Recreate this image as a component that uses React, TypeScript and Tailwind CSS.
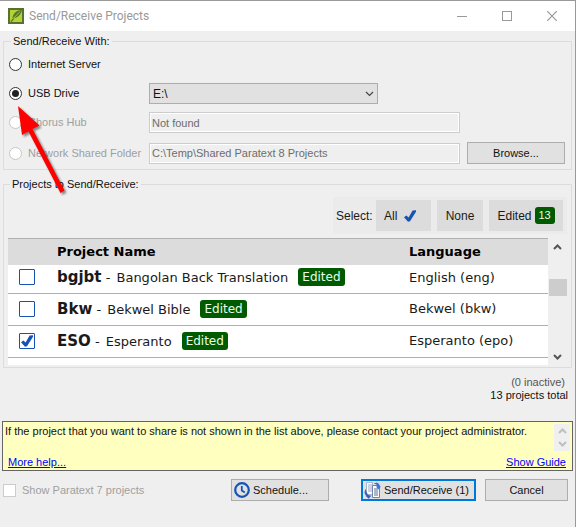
import React from "react";

const projects = [
  { code: "bgjbt", name: "Bangolan Back Translation", language: "English (eng)", checked: false },
  { code: "Bkw", name: "Bekwel Bible", language: "Bekwel (bkw)", checked: false },
  { code: "ESO", name: "Esperanto", language: "Esperanto (epo)", checked: true },
];

const buttonBase = "flex h-[22px] items-center border border-[#adadad] bg-[#e1e1e1]";

const radioStyle =
  "relative h-[13px] w-[13px] shrink-0 appearance-none rounded-full border border-[#333] bg-white checked:before:absolute checked:before:inset-[2px] checked:before:rounded-full checked:before:bg-[#222] disabled:border-[#c6c6c6]";

function Tick({ className }: { className: string }) {
  return (
    <svg viewBox="0 0 12 12" className={className} aria-hidden="true">
      <path d="M0 7.2 2.4 5.4 4.6 7.4 8.6 0.6 12 0.2 12 1.8 6 11.2 4 11.8Z" fill="#1553b5" />
    </svg>
  );
}

function Chevron({
  up = false,
  thin = false,
  className,
}: {
  up?: boolean;
  thin?: boolean;
  className: string;
}) {
  return (
    <svg viewBox="0 0 9 6" className={className} aria-hidden="true">
      <path
        d={up ? "M1 5 4.5 1.5 8 5" : "M1 1 4.5 4.5 8 1"}
        fill="none"
        stroke="currentColor"
        strokeWidth={thin ? 1.2 : 2}
      />
    </svg>
  );
}

function TitleBar() {
  return (
    <header className="flex h-[30px] items-center bg-white pl-2 text-[#999]">
      <svg viewBox="0 0 16 16" className="h-4 w-4" aria-hidden="true">
        <rect width="16" height="16" fill="#56722f" />
        <rect x="2" y="2" width="12" height="12" fill="#b2d235" />
        <path d="M14 2C9 2 5.4 5 4.4 9.6L7 10C11 8.6 13 6 14 2Z" fill="#56722f" />
        <path d="M3 13.6 6 10" stroke="#56722f" strokeWidth="1.2" />
        <path d="M5.2 10.6 12 3.6" stroke="#b2d235" strokeWidth=".9" />
      </svg>
      <h1 className="ml-[5px] flex-1 font-['Roboto',sans-serif] text-[12px]">Send/Receive Projects</h1>
      <button aria-label="Minimize" className="flex h-full w-[45px] items-center justify-center">
        <svg viewBox="0 0 10 10" className="h-[10px] w-[10px]">
          <path d="M0 5.5H10" stroke="#999" />
        </svg>
      </button>
      <button aria-label="Maximize" className="flex h-full w-[45px] items-center justify-center">
        <svg viewBox="0 0 10 10" className="h-[10px] w-[10px]">
          <rect x=".5" y=".5" width="9" height="9" fill="none" stroke="#999" />
        </svg>
      </button>
      <button aria-label="Close" className="flex h-full w-[46px] items-center justify-center">
        <svg viewBox="0 0 10 10" className="h-[10px] w-[10px]">
          <path d="M0 0 10 10M10 0 0 10" stroke="#999" strokeWidth="1.2" />
        </svg>
      </button>
    </header>
  );
}

function ConnectionOption({
  id,
  label,
  checked = false,
  disabled = false,
}: {
  id: string;
  label: string;
  checked?: boolean;
  disabled?: boolean;
}) {
  return (
    <div className="flex w-[140px] shrink-0 items-center gap-[6px]">
      <input id={id} type="radio" name="target" defaultChecked={checked} disabled={disabled} className={radioStyle} />
      <label htmlFor={id} className={disabled ? "text-[#a0a0a0]" : ""}>
        {label}
      </label>
    </div>
  );
}

function ConnectionGroup() {
  const field =
    "h-[21px] w-[311px] border border-[#ccc] bg-[#efefef] px-[2px] text-[#6d6d6d] shadow-[inset_0_0_0_1px_white]";
  return (
    <fieldset className="mx-[3px] border border-[#dcdcdc] pl-[5px] pr-[6px]">
      <legend className="ml-[2px] px-[2px] leading-[17px]">Send/Receive With:</legend>
      <div className="flex h-[29px] items-center">
        <ConnectionOption id="internet" label="Internet Server" />
      </div>
      <div className="flex h-[29px] items-center">
        <ConnectionOption id="usb" label="USB Drive" checked />
        <div className="relative">
          <select
            aria-label="USB drive letter"
            className="block h-[21px] w-[229px] appearance-none border border-[#adadad] bg-[#e1e1e1] px-[3px] text-[12px]"
          >
            <option>E:\</option>
          </select>
          <Chevron thin className="pointer-events-none absolute right-1 top-2 h-[6px] w-[9px] text-[#444]" />
        </div>
      </div>
      <div className="flex h-[29px] items-center">
        <ConnectionOption id="chorus" label="Chorus Hub" disabled />
        <input aria-label="Chorus Hub address" disabled defaultValue="Not found" className={field} />
      </div>
      <div className="flex h-8 items-center">
        <ConnectionOption id="network" label="Network Shared Folder" disabled />
        <input
          aria-label="Shared folder path"
          disabled
          defaultValue="C:\Temp\Shared Paratext 8 Projects"
          className={field}
        />
        <button className={`${buttonBase} ml-auto w-[98px] justify-center`}>Browse...</button>
      </div>
    </fieldset>
  );
}

function ProjectTable() {
  return (
    <div className="mt-1 flex h-[127px]">
      <div className="flex-1 overflow-hidden border-t border-[#b0b0b0] bg-white">
        <table className="w-full table-fixed border-collapse text-left font-['DejaVu_Sans',sans-serif] text-[13px] text-black">
          <thead className="bg-[#dcdcdc]">
            <tr className="h-[26px]">
              <th className="w-[49px] p-0" aria-label="Selected" />
              <th className="p-0 leading-[18px]">Project Name</th>
              <th className="w-[139px] p-0 leading-[18px]">Language</th>
            </tr>
          </thead>
          <tbody>
            {projects.map((p, i) => (
              <tr
                key={p.code}
                className={`border-b border-[#b0b0b0] ${i === 0 ? "h-7 [&>td]:pb-[3px]" : "h-8"}`}
              >
                <td className="p-0 pl-[11px]">
                  <span className="relative flex h-4 w-4">
                    <input
                      type="checkbox"
                      aria-label={`Select ${p.code}`}
                      defaultChecked={p.checked}
                      className="h-4 w-4 appearance-none rounded-[1px] border border-[#1553b5] bg-white"
                    />
                    {p.checked && <Tick className="pointer-events-none absolute left-[2px] top-[2px] h-3 w-3" />}
                  </span>
                </td>
                <td className="p-0">
                  <div className="flex items-center leading-[18px] text-[#1a1a1a]">
                    <span className="whitespace-pre">
                      <b className="text-[15px]">{p.code}</b>
                      <span className="mr-[2px]"> - </span>
                      {p.name}
                    </span>
                    <span className="ml-[10px] rounded-[3px] bg-[#005a00] px-1 text-[12px] text-[#e8ffe8]">Edited</span>
                  </div>
                </td>
                <td className="p-0 text-[#1a1a1a]">{p.language}</td>
              </tr>
            ))}
          </tbody>
        </table>
      </div>
      <div className="flex w-[19px] flex-col items-center text-[#555]">
        <Chevron up className="my-[6px] h-[6px] w-[9px]" />
        <div className="mt-[23px] h-[17px] w-[18px] bg-[#cdcdcd]" />
        <Chevron className="mb-[5px] mt-auto h-[6px] w-[9px]" />
      </div>
    </div>
  );
}

function ProjectsGroup() {
  const toolButton = "flex h-[31px] items-center bg-[#dcdcdc]";
  return (
    <fieldset className="mx-[3px] mt-[6px] border border-[#dcdcdc] pb-[2px] pl-1 pr-1">
      <legend className="ml-[2px] px-[2px] leading-[17px]">Projects to Send/Receive:</legend>
      <div className="ml-auto mt-1 flex h-[37px] w-[234px] items-center gap-[6px] bg-[#ebebeb] pl-[3px] text-[12px] text-[#1a1a1a]">
        <span className="-mr-[3px] w-[37px]">Select:</span>
        <button className={`${toolButton} w-[55px] pl-2`}>
          All
          <Tick className="ml-[7px] h-3 w-3" />
        </button>
        <button className={`${toolButton} w-[46px] justify-center`}>None</button>
        <button className={`${toolButton} w-[74px] justify-center gap-[3px]`}>
          Edited
          <span className="w-5 rounded-[3px] bg-[#005a00] text-center text-[11px] leading-[17px] text-[#e8ffe8]">13</span>
        </button>
      </div>
      <ProjectTable />
    </fieldset>
  );
}

function HelpPanel() {
  return (
    <section className="mx-[2px] mt-[19px] flex h-[50px] flex-col justify-between border border-[#646464] bg-[#ffffbf] pl-[2px]">
      <div className="flex justify-between">
        <p className="pt-[2px] leading-[15px]">
          If the project that you want to share is not shown in the list above, please contact your project administrator.
        </p>
        <div className="mr-[2px] mt-[2px] flex h-[27px] w-4 flex-col items-center justify-between bg-[#f0f0f0] py-1 text-[#bfbfbf]">
          <Chevron up className="h-[6px] w-[9px]" />
          <Chevron className="h-[6px] w-[9px]" />
        </div>
      </div>
      <div className="flex justify-between pl-[3px] pr-[6px] leading-[15px] text-[#0000ff] underline">
        <a href="#help">More help...</a>
        <a href="#guide">Show Guide</a>
      </div>
    </section>
  );
}

function ClockIcon() {
  return (
    <svg viewBox="0 0 16 16" className="h-4 w-4" fill="none" stroke="#1553b5" aria-hidden="true">
      <circle cx="8" cy="8" r="6.8" strokeWidth="2.2" />
      <path d="M7.8 4V8.4L10.8 10.4" strokeWidth="1.8" />
    </svg>
  );
}

function SyncPagesIcon() {
  return (
    <svg viewBox="0 0 17 17" className="h-[17px] w-[17px]" aria-hidden="true">
      <path d="M2.5 .5H8.5V12.5H2.5Z" fill="#fff" stroke="#a9b6cc" />
      <path d="M4 3H8M4 5H8M4 7H8M4 9H8" stroke="#7f93b8" strokeWidth=".8" />
      <path d="M8.5 3.5H15.5V15.5H8.5Z" fill="#fff" stroke="#6f83a8" />
      <path d="M10 7H14M10 9H14M10 11H14M10 13H14" stroke="#4a5f88" strokeWidth=".9" />
      <path d="M9.5 1.8 12.5 0.6C14.8 1 15.6 2.6 15.6 4.4H17L14.4 7.6 11.8 4.4H13.2C13.2 3 12 2 9.5 1.8Z" fill="#3f74d8" />
      <path d="M2 7C0 9 0 12.4 2.6 13.6H1.4L4.6 16.8 7.6 13.6H6C3 12.8 2 10 2 7Z" fill="#3460c4" />
    </svg>
  );
}

function Footer() {
  return (
    <footer className="flex items-center pb-[25px] pl-[3px] pr-[7px] pt-2">
      <input
        id="legacy"
        type="checkbox"
        disabled
        className="h-[13px] w-[13px] appearance-none border border-[#ccc] bg-white"
      />
      <label htmlFor="legacy" className="ml-[6px] flex-1 text-[#a0a0a0]">
        Show Paratext 7 projects
      </label>
      <button className={`${buttonBase} w-[98px] gap-[3px] pl-[2px]`}>
        <ClockIcon />
        Schedule...
      </button>
      <button className="ml-8 flex h-[22px] w-[115px] items-center gap-[3px] border-2 border-[#0078d7] bg-[#e1e1e1] pl-[1px]">
        <SyncPagesIcon />
        Send/Receive (1)
      </button>
      <button className={`${buttonBase} ml-[9px] w-[83px] justify-center`}>Cancel</button>
    </footer>
  );
}

function PointerArrow() {
  return (
    <svg
      viewBox="0 0 60 100"
      className="pointer-events-none absolute left-[14px] top-[102px] h-[100px] w-[60px] drop-shadow-[2px_2px_1px_rgba(0,0,0,0.45)]"
      aria-hidden="true"
    >
      <path d="M4 3 25.5 22.5 18.5 26 50.5 87.5 46.5 90 14.5 28.5 8 32Z" fill="#ff0000" />
    </svg>
  );
}

export default function App() {
  return (
    <main className="relative min-h-screen border-r border-t border-[#999] bg-[#efefef] font-['Liberation_Sans',Arial,sans-serif] text-[11px] text-[#111]">
      <TitleBar />
      <div className="pt-[2px]">
        <ConnectionGroup />
        <ProjectsGroup />
        <div className="mt-2 pr-[7px] text-right leading-[13px]">
          <p className="pr-[3px] text-[#555]">(0 inactive)</p>
          <p>13 projects total</p>
        </div>
        <HelpPanel />
        <Footer />
      </div>
      <PointerArrow />
    </main>
  );
}
